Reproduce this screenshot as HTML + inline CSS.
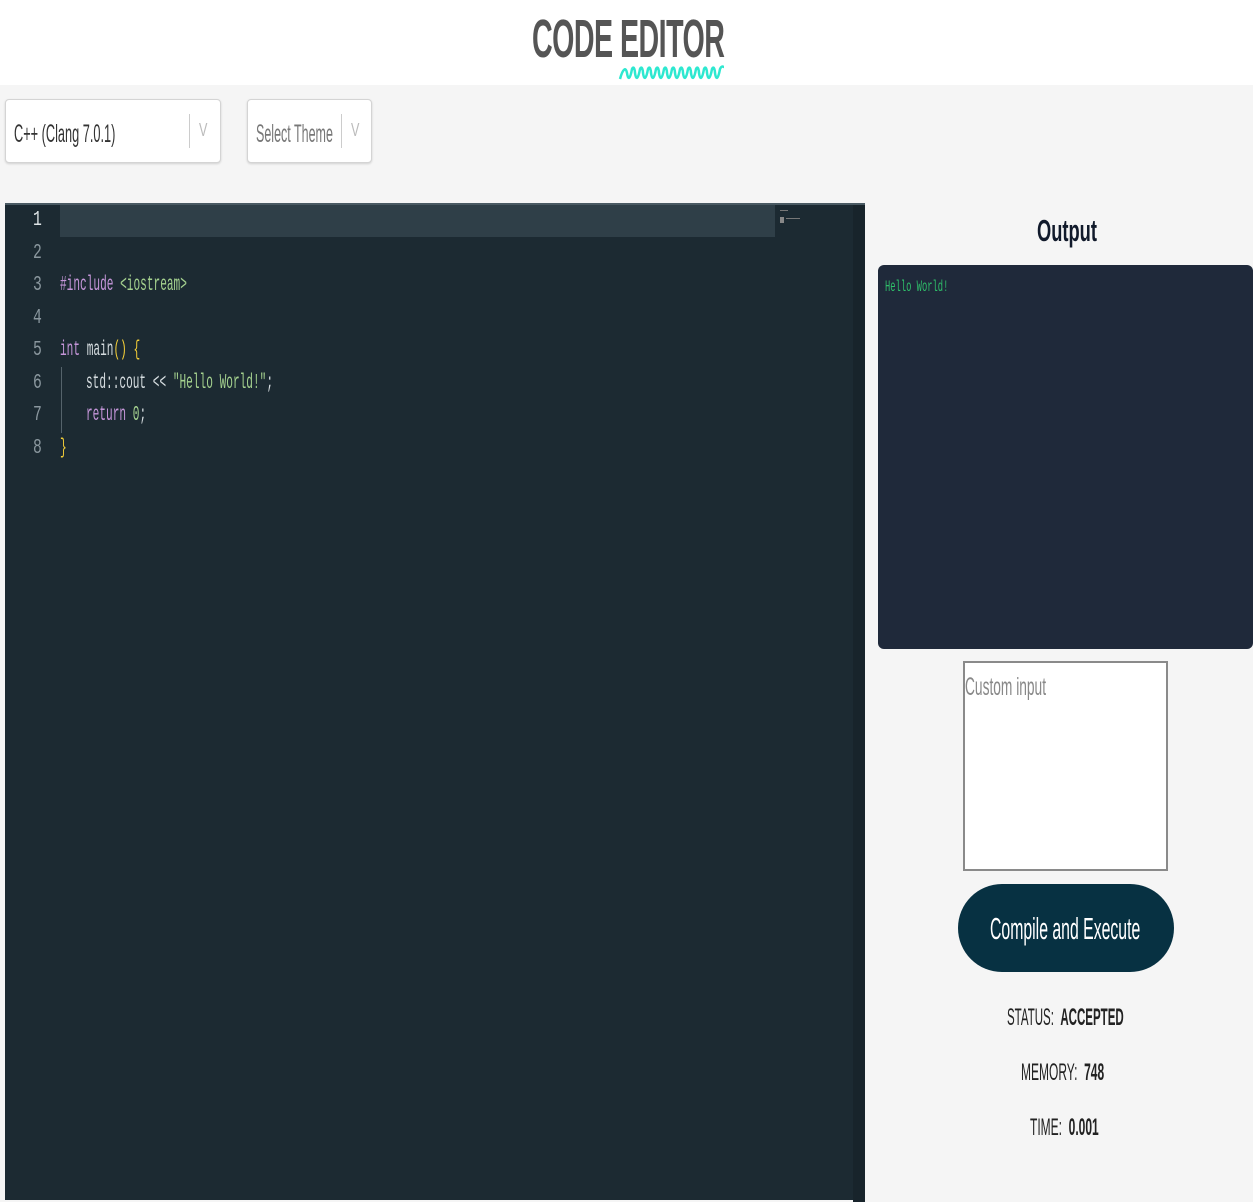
<!DOCTYPE html>
<html><head><meta charset="utf-8"><style>
*{margin:0;padding:0;box-sizing:border-box}
body{width:1253px;height:1200px;background:#f5f5f5;font-family:"Liberation Sans",sans-serif;position:relative;overflow:hidden}
.abs{position:absolute}
.n{display:inline-block;transform-origin:left center;white-space:nowrap}
.hdr{left:0;top:0;width:1253px;height:85px;background:#fff}
.title{left:532px;top:8px;font-size:54px;font-weight:bold;color:#555;letter-spacing:-1px}
.sel{background:#fff;border:1px solid #d4d4d4;border-radius:4px;box-shadow:0 1px 2px rgba(0,0,0,.15)}
.sel .t{position:absolute;top:20px;font-size:25px;color:#333}
.sel .sep{position:absolute;top:14px;width:1px;height:34px;background:#ccc}
.sel .chev{position:absolute;top:20px;font-size:18px;color:#bbb}
.ed{left:5px;top:203px;width:860px;height:997px;background:#1c2a32;border-top:2px solid #4a5a63}
.ln{position:absolute;left:24px;font-family:"Liberation Mono",monospace;font-size:21px;color:#8a979e;width:20px;text-align:center}
.code{position:absolute;left:55px;font-family:"Liberation Mono",monospace;font-size:21px;color:#d6dde0}
.code .n{transform:scaleX(.53)}
.ln .n{transform:scaleX(.7)}
.k{color:#c596d9}.s{color:#a5d28f}.y{color:#f2cd38}
</style></head><body>
<div class="abs hdr"></div>
<div class="abs title"><span class="n" style="transform:scaleX(.53)">CODE EDITOR</span></div>
<svg class="abs" style="left:618px;top:64px" width="110" height="18" viewBox="0 0 110 18"><path d="M2 15 C5 4 8 3 9 9 C10 16 12 16 14 5 C16 1 17 7 17 9 C18 16 20 16 22 5 C24 1 25 7 25 9 C26 16 28 16 30 5 C32 1 33 7 33 9 C34 16 36 16 38 5 C40 1 41 7 41 9 C42 16 44 16 46 5 C48 1 49 7 49 9 C50 16 52 16 54 5 C56 1 57 7 57 9 C58 16 60 16 62 5 C64 1 65 7 65 9 C66 16 68 16 70 5 C72 1 73 7 73 9 C74 16 76 16 78 5 C80 1 81 7 81 9 C82 16 84 16 86 5 C88 1 89 7 89 9 C90 16 92 16 94 5 C96 1 97 7 97 9 C98 16 100 16 102 5 C104 1 105 3 106 3" fill="none" stroke="#2ee8d0" stroke-width="2.5"/></svg>

<div class="abs sel" style="left:5px;top:99px;width:216px;height:64px">
<div class="t" style="left:8px"><span class="n" style="transform:scaleX(.51)">C++ (Clang 7.0.1)</span></div>
<div class="sep" style="left:183px"></div><div class="chev" style="left:193px"><span class="n" style="transform:scaleX(.7)">V</span></div></div>
<div class="abs sel" style="left:247px;top:99px;width:125px;height:64px">
<div class="t" style="left:8px;color:#777"><span class="n" style="transform:scaleX(.5)">Select Theme</span></div>
<div class="sep" style="left:93px"></div><div class="chev" style="left:103px"><span class="n" style="transform:scaleX(.7)">V</span></div></div>

<div class="abs ed">
<div class="abs" style="left:55px;top:0;width:715px;height:32px;background:#2f3f48"></div>
<div class="abs" style="left:848px;top:0;width:12px;height:997px;background:#18242b"></div>
<div class="abs" style="left:775px;top:5px;width:8px;height:1px;background:#777"></div>
<div class="abs" style="left:775px;top:12px;width:4px;height:6px;background:#888"></div>
<div class="abs" style="left:781px;top:13px;width:14px;height:1px;background:#777"></div>
<div class="abs" style="left:56px;top:162px;width:1px;height:66px;background:#55636b"></div>
<div class="ln" style="top:4px;color:#dfe5e8"><span class="n">1</span></div>
<div class="ln" style="top:37px"><span class="n">2</span></div>
<div class="ln" style="top:69px"><span class="n">3</span></div>
<div class="ln" style="top:102px"><span class="n">4</span></div>
<div class="ln" style="top:134px"><span class="n">5</span></div>
<div class="ln" style="top:167px"><span class="n">6</span></div>
<div class="ln" style="top:199px"><span class="n">7</span></div>
<div class="ln" style="top:232px"><span class="n">8</span></div>
<div class="code" style="top:69px"><span class="n"><span class="k">#include</span> <span class="s">&lt;iostream&gt;</span></span></div>
<div class="code" style="top:134px"><span class="n"><span class="k">int</span> main<span class="y">()</span> <span class="y">{</span></span></div>
<div class="code" style="top:167px;left:81px"><span class="n">std::cout &lt;&lt; <span class="s">"Hello World!"</span>;</span></div>
<div class="code" style="top:199px;left:81px"><span class="n"><span class="k">return</span> <span class="s">0</span>;</span></div>
<div class="code" style="top:232px"><span class="n y">}</span></div>
</div>

<div class="abs" style="left:1037px;top:213px;font-size:31px;font-weight:bold;color:#111a2b"><span class="n" style="transform:scaleX(.59)">Output</span></div>
<div class="abs" style="left:878px;top:265px;width:375px;height:384px;background:#1f293a;border-radius:6px"></div>
<div class="abs" style="left:885px;top:278px;font-family:'Liberation Mono',monospace;font-size:16px;color:#2fbf6a"><span class="n" style="transform:scaleX(.55)">Hello World!</span></div>

<div class="abs" style="left:963px;top:661px;width:205px;height:210px;background:#fff;border:2px solid #8a8a8a"></div>
<div class="abs" style="left:965px;top:673px;font-size:25px;color:#888"><span class="n" style="transform:scaleX(.55)">Custom input</span></div>
<div class="abs" style="left:958px;top:884px;width:216px;height:88px;background:#073142;border-radius:44px"></div>
<div class="abs" style="left:990px;top:911px;font-size:31px;color:#fff"><span class="n" style="transform:scaleX(.51)">Compile and Execute</span></div>

<div class="abs" style="left:1007px;top:1004px;font-size:24px;color:#222"><span class="n" style="transform:scaleX(.48)">STATUS:&nbsp; <b>ACCEPTED</b></span></div>
<div class="abs" style="left:1021px;top:1059px;font-size:24px;color:#222"><span class="n" style="transform:scaleX(.5)">MEMORY:&nbsp; <b>748</b></span></div>
<div class="abs" style="left:1030px;top:1114px;font-size:24px;color:#222"><span class="n" style="transform:scaleX(.5)">TIME:&nbsp; <b>0.001</b></span></div>
</body></html>
